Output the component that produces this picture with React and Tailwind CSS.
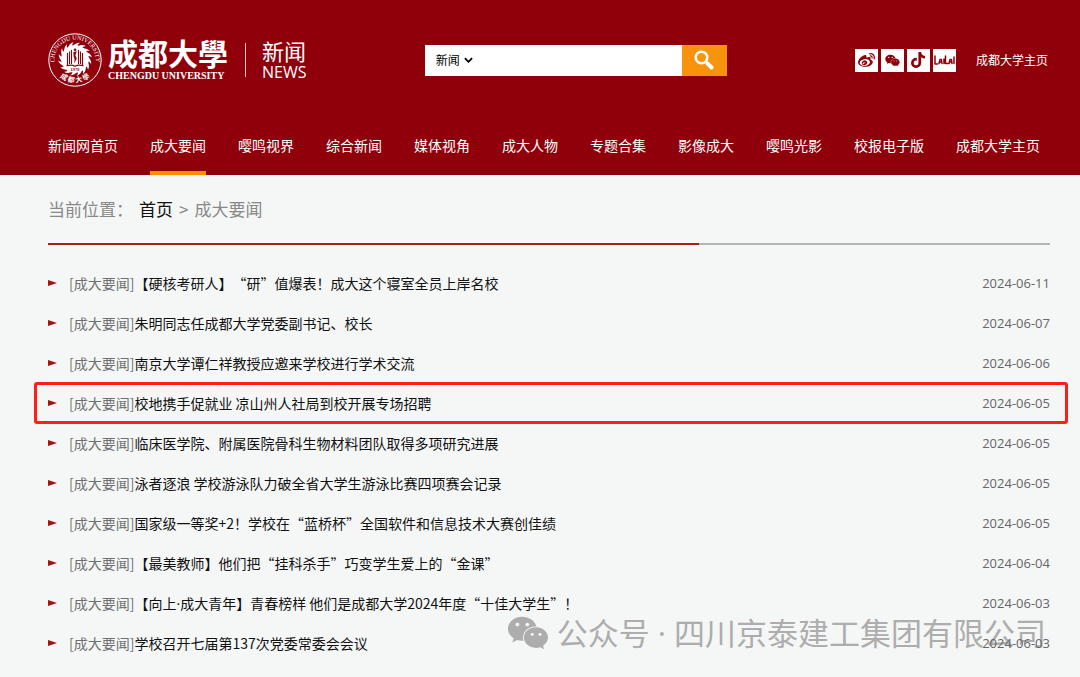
import { Fragment } from 'react'
import { FaWeibo, FaWeixin, FaTiktok } from 'react-icons/fa'

const NAV = [
  '新闻网首页',
  '成大要闻',
  '嘤鸣视界',
  '综合新闻',
  '媒体视角',
  '成大人物',
  '专题合集',
  '影像成大',
  '嘤鸣光影',
  '校报电子版',
  '成都大学主页',
]

const NEWS = [
  { title: '【硬核考研人】“研”值爆表！成大这个寝室全员上岸名校', date: '2024-06-11' },
  { title: '朱明同志任成都大学党委副书记、校长', date: '2024-06-07' },
  { title: '南京大学谭仁祥教授应邀来学校进行学术交流', date: '2024-06-06' },
  { title: '校地携手促就业 凉山州人社局到校开展专场招聘', date: '2024-06-05', marked: true },
  { title: '临床医学院、附属医院骨科生物材料团队取得多项研究进展', date: '2024-06-05' },
  { title: '泳者逐浪 学校游泳队力破全省大学生游泳比赛四项赛会记录', date: '2024-06-05' },
  { title: '国家级一等奖+2！学校在“蓝桥杯”全国软件和信息技术大赛创佳绩', date: '2024-06-05' },
  { title: '【最美教师】他们把“挂科杀手”巧变学生爱上的“金课”', date: '2024-06-04' },
  { title: '【向上·成大青年】青春榜样 他们是成都大学2024年度“十佳大学生”！', date: '2024-06-03' },
  { title: '学校召开七届第137次党委常委会会议', date: '2024-06-03' },
]

const RAYS = Array.from({ length: 16 }, (_, i) => i * 22.5)

function Seal() {
  return (
    <svg viewBox="0 0 54 54" className="size-[54px] shrink-0" aria-hidden="true">
      <defs>
        <path id="seal-top" d="M8.2 35.500 A20.600 20.600 0 1 1 45.800 35.500" />
        <path id="seal-bottom" d="M7 38.500 A23.600 23.600 0 0 0 47 38.500" />
      </defs>
      <circle cx="27" cy="27" r="26.2" fill="none" stroke="#fff" strokeWidth="1" />
      <text fill="#fff" fontSize="6.2" fontFamily="Liberation Serif, serif">
        <textPath href="#seal-top" startOffset="50%" textAnchor="middle">CHENGDU UNIVERSITY</textPath>
      </text>
      <text fill="#fff" fontSize="7" fontWeight="700" fontFamily="Noto Sans CJK SC, sans-serif">
        <textPath href="#seal-bottom" startOffset="50%" textAnchor="middle">成 都 大 學</textPath>
      </text>
      <circle cx="27" cy="26" r="13.8" fill="#fff" />
      {RAYS.map((a) => (
        <path
          key={a}
          d="M24.5 13.4 Q27.5 9.6 32 9.800 Q29.4 11.4 29 13.6 Z"
          fill="#fff"
          transform={`rotate(${a} 27 26)`}
        />
      ))}
      <path
        d="M19.500 20v12M21.500 18.5v12.500M23.500 17v14M30.500 17v14M32.500 18.500v12.500M34.500 20v12"
        stroke="#8f000b"
        strokeWidth="1.1"
      />
      <circle cx="27" cy="16.8" r="1.300" fill="#8f000b" />
      <path d="M25.4 18.9l3.400-.6-1.4 4 1.400 3.500-2.600 4.500.4-4.300-1-2.700z" fill="#8f000b" />
      <path d="M18.500 32.800q5-1.600 8.500.4q3.500-2 8.500-.4" fill="none" stroke="#8f000b" strokeWidth="1.1" />
      <text x="27" y="38.2" textAnchor="middle" fontSize="4.4" fontWeight="700" fill="#8f000b" fontFamily="Liberation Serif, serif">
        1978
      </text>
    </svg>
  )
}

function LalaIcon() {
  return (
    <svg viewBox="0 0 21 12" className="h-3 w-[21px]" fill="none" stroke="currentColor" strokeWidth="1.500" strokeLinejoin="round" strokeLinecap="round">
      <path d="M1 2v8h2.500M5 9.500l1-4h1.500l.5 4M5.500 8h2M10 5v4.500M11.500 2v7.500h2.500M15 9.500l1-4h1.500l.5 4M15.500 8h2M20 3v6.500" />
    </svg>
  )
}

function Social({ label, children }) {
  return (
    <a href="#" aria-label={label} className="flex size-[23px] items-center justify-center overflow-hidden bg-white text-[#8f000b]">
      {children}
    </a>
  )
}

function SiteHeader() {
  return (
    <header className="bg-[#8f000b] pr-8 pl-12 text-white">
      <div className="flex h-[120px] items-center">
        <a href="#" className="flex items-center">
          <Seal />
          <div className="ml-[6px] flex w-[120px] flex-col items-start">
            <span className="text-[30px] leading-8 font-bold">成都大學</span>
            <span className="font-['Liberation_Serif',serif] text-[10px] leading-4 font-bold whitespace-nowrap">CHENGDU UNIVERSITY</span>
          </div>
        </a>
        <div className="ml-[17px] h-[34px] w-px bg-white/80" />
        <a href="#" className="ml-4 flex flex-col">
          <span className="text-[22px] leading-6">新闻</span>
          <span className="font-['Open_Sans',sans-serif] text-base leading-5">NEWS</span>
        </a>
        <form className="mr-[10px] ml-auto flex h-[31px] w-[302px] bg-white text-black" onSubmit={(e) => e.preventDefault()}>
          <div className="relative flex items-center">
            <select aria-label="搜索范围" className="h-full w-[54px] appearance-none bg-transparent pl-[11px] text-xs outline-none">
              <option>新闻</option>
            </select>
            <svg viewBox="0 0 10 6" className="pointer-events-none absolute right-[6px] h-[6px] w-[9px]" fill="none" stroke="currentColor" strokeWidth="2">
              <path d="M1 1l4 4 4-4" />
            </svg>
          </div>
          <input aria-label="搜索" className="min-w-0 flex-1 px-2 text-sm outline-none" />
          <button aria-label="搜索" className="flex w-[45px] items-center justify-center bg-[#f7930c] text-white">
            <svg viewBox="0 0 20 20" className="size-5" fill="none" stroke="currentColor">
              <circle cx="7.500" cy="7.500" r="5.800" strokeWidth="2.500" />
              <path d="M11.500 11.500l2 2" strokeWidth="2" />
              <path d="M13.700 13.700l3.800 3.800" strokeWidth="4" strokeLinecap="round" />
            </svg>
          </button>
        </form>
        <div className="ml-auto flex items-center gap-[3px]">
          <Social label="微博"><FaWeibo size={17} /></Social>
          <Social label="微信"><FaWeixin size={15} /></Social>
          <Social label="抖音"><FaTiktok size={16} /></Social>
          <Social label="LaLa"><LalaIcon /></Social>
        </div>
        <a href="#" className="ml-5 text-xs">成都大学主页</a>
      </div>
      <nav className="flex h-[55px] justify-between pr-2 text-sm">
        {NAV.map((item) => (
          <a
            key={item}
            href="#"
            className={
              item === '成大要闻'
                ? 'border-b-4 border-[#ff8a00] pt-[15px] whitespace-nowrap'
                : 'pt-[15px] whitespace-nowrap'
            }
          >
            {item}
          </a>
        ))}
      </nav>
    </header>
  )
}

// the CJK face draws "·" full width, so take it from the Latin one
function Title({ text }) {
  return text.split('·').map((part, i) => (
    <Fragment key={part}>
      {i > 0 && <span className="font-['Open_Sans',sans-serif]">·</span>}
      {part}
    </Fragment>
  ))
}

function NewsRow({ title, date, marked }) {
  return (
    <li className="relative flex h-10 items-center text-sm">
      {marked && <div className="absolute -inset-y-px -right-[18px] -left-[14px] rounded-[3px] border-[3px] border-[#ff1f16]" />}
      <svg viewBox="0 0 9 6" className="h-[6px] w-[9px] shrink-0" fill="#a3120f">
        <path d="M0 0l9 3-9 3z" />
      </svg>
      <a href="#" className="ml-3 text-[#707070]">[成大要闻]</a>
      <a href="#" className="text-[#111] [text-spacing-trim:space-all]"><Title text={title} /></a>
      <time className="relative z-10 ml-auto font-['Open_Sans',sans-serif] text-[13px] text-[#666]">{date}</time>
    </li>
  )
}

export default function App() {
  return (
    <div lang="zh-CN" className="relative min-h-screen bg-[#f5f7f6] font-['Noto_Sans_CJK_SC',sans-serif]">
      <SiteHeader />
      <main className="pr-[30px] pl-12">
        <div className="flex h-[68px] items-center text-[17px] text-[#888]">
          <span>当前位置：</span>
          <a href="#" className="ml-[6px] text-[#111]">首页</a>
          <span className="mx-[6px]">&gt;</span>
          <span>成大要闻</span>
        </div>
        <div className="h-[2px] bg-[#b5b5b5]">
          <div className="h-full w-[65%] bg-[#a8201a]" />
        </div>
        <ul className="pt-[18px]">
          {NEWS.map((n) => (
            <NewsRow key={n.title} {...n} />
          ))}
        </ul>
      </main>
      <div className="pointer-events-none absolute right-[34px] bottom-[21px] flex items-center text-[#adadad]">
        <FaWeixin size={42} />
        <span className="ml-2 font-['Open_Sans','Noto_Sans_CJK_SC',sans-serif] text-[31px] leading-[46px] whitespace-pre">公众号 · 四川京泰建工集团有限公司</span>
      </div>
    </div>
  )
}
